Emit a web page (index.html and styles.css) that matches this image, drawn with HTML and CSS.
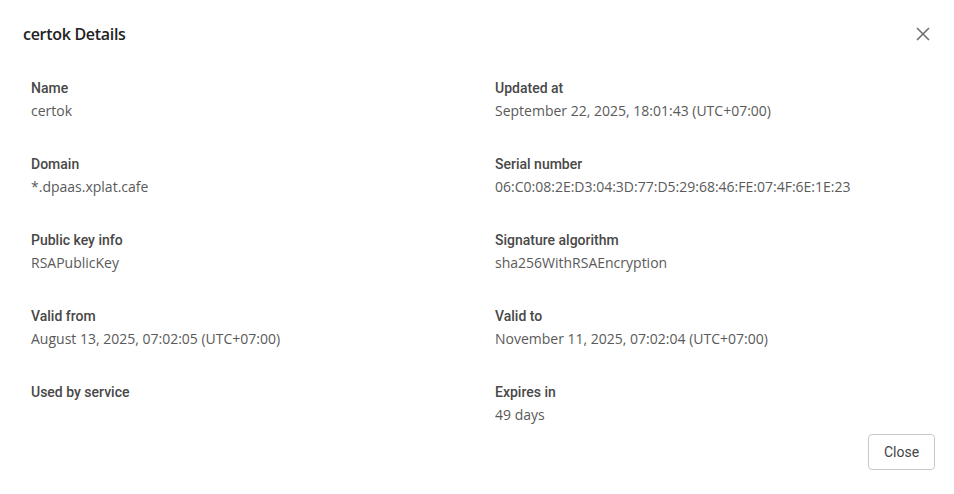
FILE: index.html
```html
<!DOCTYPE html>
<html>
<head>
<meta charset="utf-8">
<link rel="stylesheet" href="styles.css">
</head>
<body>
<div class="dialog">
  <div class="header">
    <h1 class="title">certok Details</h1>
    <button class="icon-close" aria-label="Close">
      <svg width="16" height="16" viewBox="0 0 16 16"><path d="M2 2L14 14M14 2L2 14" stroke="#6f6f6f" stroke-width="1.6" fill="none"/></svg>
    </button>
  </div>
  <div class="grid">
    <div class="field"><div class="label">Name</div><div class="value">certok</div></div>
    <div class="field"><div class="label">Updated at</div><div class="value">September 22, 2025, 18:01:43 (UTC+07:00)</div></div>
    <div class="field"><div class="label">Domain</div><div class="value">*.dpaas.xplat.cafe</div></div>
    <div class="field"><div class="label">Serial number</div><div class="value">06:C0:08:2E:D3:04:3D:77:D5:29:68:46:FE:07:4F:6E:1E:23</div></div>
    <div class="field"><div class="label">Public key info</div><div class="value">RSAPublicKey</div></div>
    <div class="field"><div class="label">Signature algorithm</div><div class="value">sha256WithRSAEncryption</div></div>
    <div class="field"><div class="label">Valid from</div><div class="value">August 13, 2025, 07:02:05 (UTC+07:00)</div></div>
    <div class="field"><div class="label">Valid to</div><div class="value">November 11, 2025, 07:02:04 (UTC+07:00)</div></div>
    <div class="field"><div class="label">Used by service</div><div class="value"></div></div>
    <div class="field"><div class="label">Expires in</div><div class="value">49 days</div></div>
  </div>
  <div class="footer">
    <button class="btn">Close</button>
  </div>
</div>
</body>
</html>
```
FILE: styles.css
```css
html, body {
  margin: 0;
  padding: 0;
  background: #fff;
}
.dialog {
  width: 954px;
  height: 494px;
  box-sizing: border-box;
  padding: 0 19px 0 23px;
  display: flex;
  flex-direction: column;
}
.header {
  display: flex;
  align-items: center;
  justify-content: space-between;
  height: 68px;
}
.title {
  margin: 0;
  font-family: "Open Sans", sans-serif;
  font-weight: 600;
  font-size: 16px;
  color: #222;
  letter-spacing: -0.3px;
}
.icon-close {
  border: 0;
  background: none;
  padding: 0;
  width: 16px;
  height: 16px;
  margin-right: 4px;
  display: flex;
}
.grid {
  display: grid;
  grid-template-columns: 464px 1fr;
  grid-auto-rows: 76px;
  padding-left: 8px;
  padding-top: 10px;
}
.label {
  font-family: Roboto, sans-serif;
  font-weight: 500;
  font-size: 14px;
  color: #484848;
  line-height: 20px;
}
.value {
  font-family: "Open Sans", sans-serif;
  font-size: 14px;
  color: #5a5a5a;
  line-height: 20px;
  margin-top: 3px;
}
.footer {
  display: flex;
  justify-content: flex-end;
  margin-top: -24px;
}
.btn {
  width: 67px;
  height: 36px;
  background: #fff;
  border: 1px solid #c8c8c8;
  border-radius: 4px;
  font-family: Roboto, sans-serif;
  font-size: 14px;
  color: #444;
  font-weight: 400;
}
```
